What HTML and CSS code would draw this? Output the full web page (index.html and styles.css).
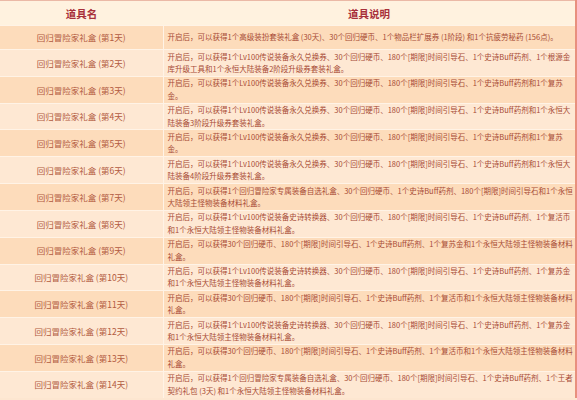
FILE: index.html
```html
<!DOCTYPE html>
<html lang="zh-CN">
<head>
<meta charset="utf-8">
<title>回归冒险家礼盒</title>
<link rel="stylesheet" href="styles.css">
</head>
<body>
<table class="items">
  <thead>
    <tr><th class="col-name">道具名</th><th class="col-desc">道具说明</th></tr>
  </thead>
  <tbody>
    <tr class="single"><td class="name">回归冒险家礼盒 (第1天)</td><td class="desc">开启后，可以获得1个高级装扮套装礼盒 (30天)、30个回归硬币、1个物品栏扩展券 (1阶段) 和1个抗疲劳秘药 (156点)。</td></tr>
    <tr><td class="name">回归冒险家礼盒 (第2天)</td><td class="desc">开启后，可以获得1个Lv100传说装备永久兑换券、30个回归硬币、180个[期限]时间引导石、1个史诗Buff药剂、1个根源金库升级工具和1个永恒大陆装备2阶段升级券套装礼盒。</td></tr>
    <tr><td class="name">回归冒险家礼盒 (第3天)</td><td class="desc">开启后，可以获得1个Lv100传说装备永久兑换券、30个回归硬币、180个[期限]时间引导石、1个史诗Buff药剂和1个复苏金。</td></tr>
    <tr><td class="name">回归冒险家礼盒 (第4天)</td><td class="desc">开启后，可以获得1个Lv100传说装备永久兑换券、30个回归硬币、180个[期限]时间引导石、1个史诗Buff药剂和1个永恒大陆装备3阶段升级券套装礼盒。</td></tr>
    <tr><td class="name">回归冒险家礼盒 (第5天)</td><td class="desc">开启后，可以获得1个Lv100传说装备永久兑换券、30个回归硬币、180个[期限]时间引导石、1个史诗Buff药剂和1个复苏金。</td></tr>
    <tr><td class="name">回归冒险家礼盒 (第6天)</td><td class="desc">开启后，可以获得1个Lv100传说装备永久兑换券、30个回归硬币、180个[期限]时间引导石、1个史诗Buff药剂和1个永恒大陆装备4阶段升级券套装礼盒。</td></tr>
    <tr><td class="name">回归冒险家礼盒 (第7天)</td><td class="desc">开启后，可以获得1个回归冒险家专属装备自选礼盒、30个回归硬币、1个史诗Buff药剂、180个[期限]时间引导石和1个永恒大陆领主怪物装备材料礼盒。</td></tr>
    <tr><td class="name">回归冒险家礼盒 (第8天)</td><td class="desc">开启后，可以获得1个Lv100传说装备史诗转换器、30个回归硬币、180个[期限]时间引导石、1个史诗Buff药剂、1个复活币和1个永恒大陆领主怪物装备材料礼盒。</td></tr>
    <tr><td class="name">回归冒险家礼盒 (第9天)</td><td class="desc">开启后，可以获得30个回归硬币、180个[期限]时间引导石、1个史诗Buff药剂、1个复苏金和1个永恒大陆领主怪物装备材料礼盒。</td></tr>
    <tr><td class="name">回归冒险家礼盒 (第10天)</td><td class="desc">开启后，可以获得1个Lv100传说装备史诗转换器、30个回归硬币、180个[期限]时间引导石、1个史诗Buff药剂、1个复苏金和1个永恒大陆领主怪物装备材料礼盒。</td></tr>
    <tr><td class="name">回归冒险家礼盒 (第11天)</td><td class="desc">开启后，可以获得30个回归硬币、180个[期限]时间引导石、1个史诗Buff药剂、1个复活币和1个永恒大陆领主怪物装备材料礼盒。</td></tr>
    <tr><td class="name">回归冒险家礼盒 (第12天)</td><td class="desc">开启后，可以获得1个Lv100传说装备史诗转换器、30个回归硬币、180个[期限]时间引导石、1个史诗Buff药剂、1个复苏金和1个永恒大陆领主怪物装备材料礼盒。</td></tr>
    <tr><td class="name">回归冒险家礼盒 (第13天)</td><td class="desc">开启后，可以获得30个回归硬币、180个[期限]时间引导石、1个史诗Buff药剂、1个复活币和1个永恒大陆领主怪物装备材料礼盒。</td></tr>
    <tr><td class="name">回归冒险家礼盒 (第14天)</td><td class="desc">开启后，可以获得1个回归冒险家专属装备自选礼盒、30个回归硬币、180个[期限]时间引导石、1个史诗Buff药剂、1个王者契约礼包 (3天) 和1个永恒大陆领主怪物装备材料礼盒。</td></tr>
  </tbody>
</table>
</body>
</html>
```

FILE: styles.css
```css
html, body {
  margin: 0;
  padding: 0;
  background: #fde6d0;
}
body {
  font-family: "Noto Sans CJK SC", "Noto Sans", sans-serif;
  overflow: hidden;
}
.items {
  width: 577px;
  border-collapse: collapse;
  table-layout: fixed;
  border-top: 1px solid #ebb9a6;
  border-right: 2px solid #e8907e;
}
.col-name { width: 163px; }
.items th {
  height: 24px;
  padding: 0;
  background: #fff2df;
  color: #a8303a;
  font-size: 10.5px;
  font-weight: bold;
  text-align: center;
  vertical-align: middle;
}
.items td {
  padding: 0.5px 4px;
  line-height: 12.4px;
  vertical-align: middle;
  border-top: 1px solid #fff3e6;
}
.items td.name {
  text-align: center;
  font-size: 8.5px;
  color: #b25a40;
  border-right: 1px solid #fff3e6;
}
.items td.desc {
  padding-right: 1px;
  font-size: 7.5px;
  color: #a84b35;
}
.items tbody tr:nth-child(odd) { background: #fddcbb; }
.items tbody tr:nth-child(even) { background: #fee8d3; }
.items tr.single td { height: 22px; }
```
